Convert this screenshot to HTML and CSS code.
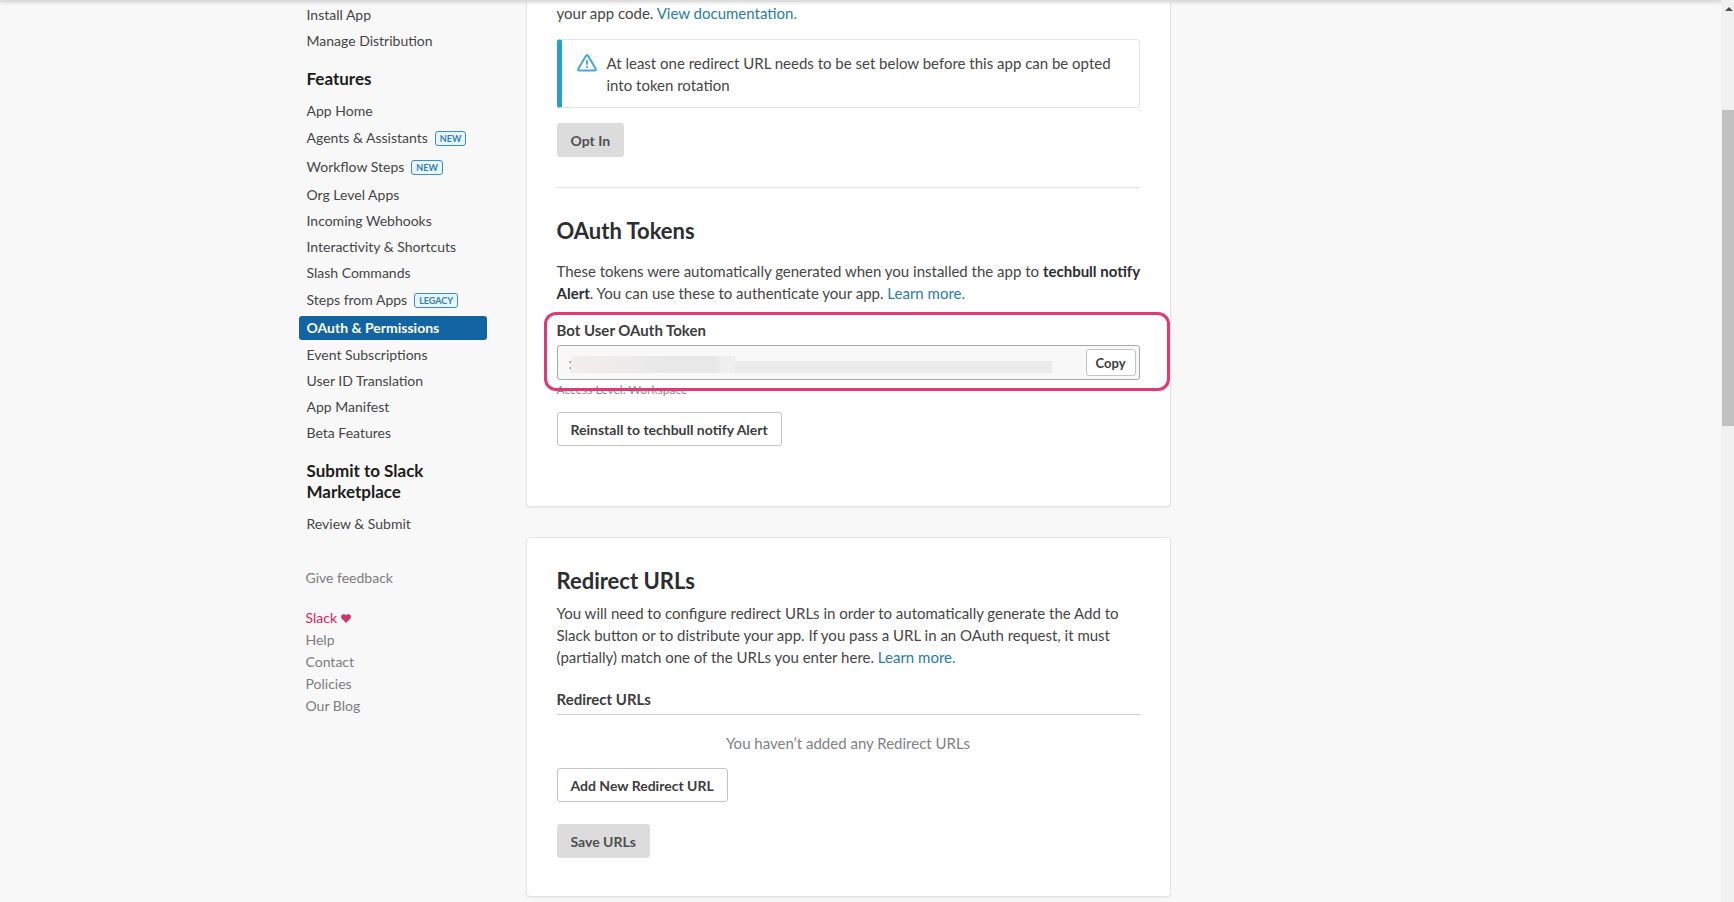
FILE: index.html
```html
<!DOCTYPE html>
<html lang="en">
<head>
    <meta charset="UTF-8">
    <meta name="viewport" content="width=device-width, initial-scale=1.0">
    <title>OAuth &amp; Permissions</title>
    <link rel="stylesheet" href="styles.css">
</head>

<body>
    <div class="page">
        <header class="topbar"></header>

        <div class="container">
            <!-- Sidebar -->
            <aside class="sidebar">
                <nav>
                    <ul class="nav-list">
                        <li><a href="#">Install App</a></li>
                        <li><a href="#">Manage Distribution</a></li>
                    </ul>
                    <h4>Features</h4>
                    <ul class="nav-list">
                        <li><a href="#">App Home</a></li>
                        <li class="tagged"><a href="#">Agents &amp; Assistants<span class="badge">NEW</span></a></li>
                        <li class="tagged"><a href="#">Workflow Steps<span class="badge">NEW</span></a></li>
                        <li><a href="#">Org Level Apps</a></li>
                        <li><a href="#">Incoming Webhooks</a></li>
                        <li><a href="#">Interactivity &amp; Shortcuts</a></li>
                        <li><a href="#">Slash Commands</a></li>
                        <li class="tagged"><a href="#">Steps from Apps<span class="badge">LEGACY</span></a></li>
                        <li><a href="#" class="active">OAuth &amp; Permissions</a></li>
                        <li><a href="#">Event Subscriptions</a></li>
                        <li><a href="#">User ID Translation</a></li>
                        <li><a href="#">App Manifest</a></li>
                        <li><a href="#">Beta Features</a></li>
                    </ul>
                    <h4>Submit to Slack Marketplace</h4>
                    <ul class="nav-list">
                        <li><a href="#">Review &amp; Submit</a></li>
                    </ul>
                </nav>

                <div class="side-footer">
                    <a href="#" class="feedback">Give feedback</a>
                    <a href="#" class="slack">Slack
                        <svg class="heart" viewBox="0 0 10 9" aria-hidden="true"><path d="M5 9 L0.8 4.8 C-0.4 3.4 0 1.2 1.4 0.5 C2.8 -0.2 4.3 0.3 5 1.6 C5.7 0.3 7.2 -0.2 8.6 0.5 C10 1.2 10.4 3.4 9.2 4.8 Z"/></svg>
                    </a>
                    <a href="#">Help</a>
                    <a href="#">Contact</a>
                    <a href="#">Policies</a>
                    <a href="#">Our Blog</a>
                </div>
            </aside>

            <!-- Main content -->
            <main class="content">
                <section class="card card-first">
                    <p>your app code. <a href="#">View documentation.</a></p>

                    <div class="callout">
                        <svg class="warning" viewBox="0 0 20 18" aria-hidden="true">
                            <path d="M8.9 1.9 L1.3 14.8 Q0.6 16.5 2.3 16.6 H17.7 Q19.4 16.5 18.7 14.8 L11.1 1.9 Q10 0.4 8.9 1.9 Z"/>
                            <path d="M10 7 V10 M10 13 V13.2"/>
                        </svg>
                        <p>At least one redirect URL needs to be set below before this app can be opted into token rotation</p>
                    </div>
                    <button type="button" class="btn btn-disabled" disabled>Opt In</button>

                    <hr>

                    <h2>OAuth Tokens</h2>
                    <p class="intro">These tokens were automatically generated when you installed the app to <strong>techbull notify Alert</strong>. You can use these to authenticate your app. <a href="#">Learn more.</a></p>

                    <div class="token">
                        <label for="bot-token">Bot User OAuth Token</label>
                        <div class="token-field">
                            <input type="text" id="bot-token" value=":" readonly>
                            <span class="mask"></span>
                            <button type="button" class="btn btn-copy">Copy</button>
                        </div>
                        <small>Access Level: Workspace</small>
                        <div class="highlight"></div>
                    </div>

                    <button type="button" class="btn">Reinstall to techbull notify Alert</button>
                </section>

                <section class="card card-urls">
                    <h2>Redirect URLs</h2>
                    <p class="intro">You will need to configure redirect URLs in order to automatically generate the Add to Slack button or to distribute your app. If you pass a URL in an OAuth request, it must (partially) match one of the URLs you enter here. <a href="#">Learn more.</a></p>

                    <h3>Redirect URLs</h3>
                    <p class="empty">You haven’t added any Redirect URLs</p>
                    <button type="button" class="btn">Add New Redirect URL</button>
                    <button type="button" class="btn btn-disabled" disabled>Save URLs</button>
                </section>
            </main>
        </div>
    </div>

    <div class="scrollbar" aria-hidden="true">
        <div class="scroll-arrow"></div>
        <div class="scroll-thumb"></div>
    </div>
</body>
</html>
```
FILE: styles.css
```css
* {
    box-sizing: border-box;
}

body {
    display: flex;
    margin: 0;
    height: 100vh;
    overflow: hidden;
    background-color: #f8f8f8;
    color: #454547;
    font-family: Lato, "Liberation Sans", sans-serif;
    font-size: 15px;
    line-height: 22px;
}

a {
    color: #2a7ba8;
    text-decoration: none;
}

p,
h2,
h3,
h4,
ul {
    margin: 0;
    padding: 0;
}

.page {
    flex: 1;
    overflow: hidden;
}

.topbar {
    height: 2px;
    background-color: #dcdcdc;
    box-shadow: 0 1px 3px rgba(0, 0, 0, 0.15);
    position: relative;
    z-index: 1;
}

.container {
    display: flex;
    gap: 39px;
    max-width: 1124px;
    margin: 0 auto;
}

/* Sidebar */
.sidebar {
    width: 188px;
    flex-shrink: 0;
    font-size: 14px;
}

.nav-list {
    list-style: none;
}

.nav-list li {
    padding: 1px 0;
}

.nav-list .tagged {
    padding: 2px 0 3px;
}

.nav-list a {
    display: flex;
    align-items: center;
    height: 24px;
    padding: 0 8px;
    border-radius: 3px;
    color: #454547;
}

.nav-list .active {
    margin-bottom: 1px;
    background-color: #1264a3;
    color: #fff;
    font-weight: bold;
}

.sidebar h4 {
    padding: 14px 8px 9px;
    color: #1d1c1d;
    font-size: 17px;
    line-height: 21px;
}

.badge {
    height: 15px;
    margin-left: 7px;
    padding: 0 4px;
    border: 1px solid #3d8fbd;
    border-radius: 3px;
    background-color: #e8f5fa;
    color: #2f81b3;
    font-size: 9px;
    font-weight: bold;
    line-height: 13px;
}

.side-footer {
    display: flex;
    flex-direction: column;
    padding: 30px 7px;
}

.side-footer a {
    color: #7c7c7e;
}

.side-footer .feedback {
    margin-bottom: 18px;
}

.side-footer .slack {
    color: #e01e5a;
}

.heart {
    width: 10px;
    height: 9px;
    fill: #cf3566;
}

/* Cards */
.content {
    width: 645px;
}

.card {
    display: flex;
    flex-direction: column;
    align-items: flex-start;
    padding: 28px 30px 38px;
    border: 1px solid #e4e4e4;
    border-radius: 4px;
    background-color: #fff;
    box-shadow: 0 1px 2px rgba(0, 0, 0, 0.06);
}

.card-first {
    padding-top: 0;
    padding-bottom: 60px;
    border-top: none;
    border-top-left-radius: 0;
    border-top-right-radius: 0;
}

.card-urls {
    margin-top: 30px;
}

.card h2 {
    margin-bottom: 6px;
    color: #2c2d30;
    font-size: 22px;
    line-height: 30px;
}

.card-first h2 {
    margin-bottom: 14px;
}

.card strong {
    color: #2c2d30;
}

.intro {
    margin-right: -8px;
}

.card hr {
    width: 100%;
    margin: 30px 0 28px;
    border: none;
    border-top: 1px solid #e3e3e3;
}

.callout {
    display: flex;
    gap: 10px;
    width: 100%;
    margin: 15px 0;
    padding: 12px 15px 11px;
    border: 1px solid #e6e6e6;
    border-left: 5px solid #2d9ecc;
    border-radius: 3px;
}

.warning {
    flex-shrink: 0;
    width: 20px;
    height: 18px;
    margin-top: 2px;
    fill: none;
    stroke: #49a6d4;
    stroke-width: 2;
    stroke-linecap: round;
}

.btn {
    height: 34px;
    padding: 0 13px;
    border: 1px solid #c4c4c6;
    border-radius: 3px;
    background-color: #fff;
    color: #3c3c3e;
    font-family: inherit;
    font-size: 14px;
    font-weight: bold;
}

.btn-disabled {
    border-color: #dcdcdc;
    background-color: #dcdcdc;
    color: #4f4f51;
}

/* Token field */
.token {
    position: relative;
    width: 100%;
    margin: 15px 0 12px;
}

.token label {
    display: block;
    margin-bottom: 4px;
    color: #3c3c3e;
    font-weight: bold;
}

.token-field {
    display: flex;
    align-items: center;
    position: relative;
    height: 35px;
    padding-right: 3px;
    border: 1px solid #a9a9ab;
    border-radius: 3px;
    background-color: #f8f8f8;
}

.token-field input {
    flex: 1;
    min-width: 0;
    padding: 0 11px;
    border: none;
    background: none;
    color: #8a8a8a;
    font-family: inherit;
    font-size: 15px;
}

.mask {
    position: absolute;
    left: 13px;
    right: 87px;
    bottom: 6px;
    height: 12px;
    background-color: #ebebeb;
}

.mask::before {
    content: "";
    position: absolute;
    left: 0;
    bottom: 0;
    width: 164px;
    height: 17px;
    background: linear-gradient(to right, #f3eeee, #e8e8e8 60%, #e8e8e8 90%, #efefef 91%);
}

.btn-copy {
    height: 27px;
    padding: 0 9px;
    font-size: 13px;
}

.token small {
    display: block;
    color: #8a8a8c;
    font-size: 12px;
    line-height: 20px;
}

.highlight {
    position: absolute;
    top: -7px;
    left: -13px;
    right: -30px;
    bottom: 9px;
    border: 3px solid #e03a72;
    border-radius: 12px;
    pointer-events: none;
}

.card h3 {
    width: 100%;
    margin-top: 20px;
    padding-bottom: 4px;
    border-bottom: 1px solid #cfcfcf;
    color: #3c3c3e;
    font-size: 15px;
}

.empty {
    width: 100%;
    padding: 17px 0 14px;
    color: #818183;
    text-align: center;
}

.card-urls .btn-disabled {
    margin-top: 22px;
}

/* Scrollbar */
.scrollbar {
    width: 13px;
    padding-left: 1px;
    background-color: #f1f1f1;
}

.scroll-arrow {
    width: 0;
    margin: 7px 0 0 3px;
    border-left: 4px solid transparent;
    border-right: 4px solid transparent;
    border-bottom: 4px solid #505050;
}

.scroll-thumb {
    height: 35%;
    margin-top: 99px;
    background-color: #c1c1c1;
}
```
